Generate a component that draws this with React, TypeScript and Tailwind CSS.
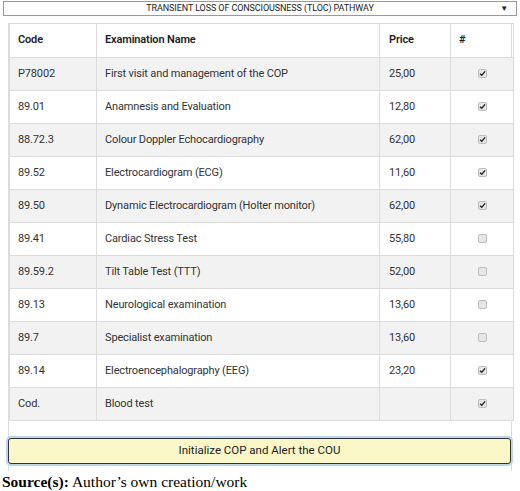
import React from 'react';

type Row = { code: string; name: string; price: string; checked: boolean };

const ROWS: Row[] = [
  { code: 'P78002', name: 'First visit and management of the COP', price: '25,00', checked: true },
  { code: '89.01', name: 'Anamnesis and Evaluation', price: '12,80', checked: true },
  { code: '88.72.3', name: 'Colour Doppler Echocardiography', price: '62,00', checked: true },
  { code: '89.52', name: 'Electrocardiogram (ECG)', price: '11,60', checked: true },
  { code: '89.50', name: 'Dynamic Electrocardiogram (Holter monitor)', price: '62,00', checked: true },
  { code: '89.41', name: 'Cardiac Stress Test', price: '55,80', checked: false },
  { code: '89.59.2', name: 'Tilt Table Test (TTT)', price: '52,00', checked: false },
  { code: '89.13', name: 'Neurological examination', price: '13,60', checked: false },
  { code: '89.7', name: 'Specialist examination', price: '13,60', checked: false },
  { code: '89.14', name: 'Electroencephalography (EEG)', price: '23,20', checked: true },
  { code: 'Cod.', name: 'Blood test', price: '', checked: true },
];

const Tick = ({ checked }: { checked: boolean }) => (
  <span className="inline-flex items-center justify-center w-[9px] h-[9px] rounded-[2px] border border-[#bdbdbd] bg-[#e6e6e6] align-middle">
    {checked && (
      <svg width="7" height="7" viewBox="0 0 8 8" fill="none">
        <path d="M1.2 4.2L3.2 6.1L6.9 1.6" stroke="#222" strokeWidth="1.6" />
      </svg>
    )}
  </span>
);

export default function App() {
  return (
    <div className="w-[520px] h-[491px] bg-white text-[#333]" style={{ fontFamily: 'Roboto, "Liberation Sans", sans-serif' }}>
      <div className="relative mx-[3px] mt-[1px] h-[15px] border border-[#9a9a9a] bg-white text-[9px] leading-[13px] tracking-[-0.1px] text-center text-[#222]">
        TRANSIENT LOSS OF CONSCIOUSNESS (TLOC) PATHWAY
        <span className="absolute right-[8px] top-0 text-[8px] leading-[13px]">▼</span>
      </div>

      <div className="mx-[8px] mt-[7px] border-x border-[#dcdcdc] pb-[7px]">
        <table className="w-full table-fixed border-collapse text-[11px] tracking-[-0.15px]">
          <colgroup>
            <col className="w-[87px]" />
            <col className="w-[283px]" />
            <col className="w-[71px]" />
            <col className="w-[63px]" />
          </colgroup>
          <thead>
            <tr className="h-[34px]">
              <th className="border border-[#dcdcdc] px-[8px] text-left font-semibold text-[#222]">Code</th>
              <th className="border border-[#dcdcdc] px-[8px] text-left font-semibold text-[#222]">Examination Name</th>
              <th className="border border-[#dcdcdc] px-[9px] text-left font-semibold text-[#222]">Price</th>
              <th className="border border-[#dcdcdc] px-[8px] text-left font-semibold text-[#222]">#</th>
            </tr>
          </thead>
          <tbody>
            {ROWS.map((r, i) => (
              <tr key={r.code + i} className={`h-[33px] ${i % 2 === 0 ? 'bg-[#f2f2f2]' : 'bg-white'}`}>
                <td className="border border-[#dcdcdc] px-[8px]">{r.code}</td>
                <td className="border border-[#dcdcdc] px-[8px]">{r.name}</td>
                <td className="border border-[#dcdcdc] px-[9px]">{r.price}</td>
                <td className="border border-[#dcdcdc] text-center">
                  <Tick checked={r.checked} />
                </td>
              </tr>
            ))}
          </tbody>
        </table>

        <button className="mt-[17px] -mx-px w-[calc(100%+1px)] h-[26px] rounded-[3px] border border-[#333] bg-[#faf7c9] text-[11.5px] text-[#222] shadow-[0_0_0_2px_#bcd6ee]">
          Initialize COP and Alert the COU
        </button>
      </div>

      <div className="pl-[2px] pt-[2px] text-[15.5px] leading-[18px] text-black" style={{ fontFamily: '"Liberation Serif", serif' }}>
        <span className="font-bold">Source(s):</span> Author’s own creation/work
      </div>
    </div>
  );
}
